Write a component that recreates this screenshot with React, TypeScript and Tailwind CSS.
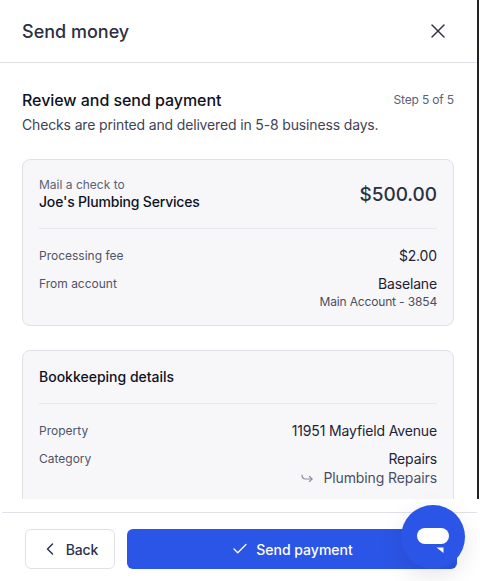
import { Check, ChevronLeft, X } from 'lucide-react';

function Row({ label, value, sub }: { label: string; value: string; sub?: React.ReactNode }) {
  return (
    <div className="flex justify-between">
      <span className="text-[12px] leading-[20px] text-[#4f5468]">{label}</span>
      <div className="text-right">
        <div className="text-[14px] leading-[20px] tracking-[-0.15px] text-[#1f2333]">{value}</div>
        {sub}
      </div>
    </div>
  );
}

export default function App() {
  return (
    <div className="relative h-[581px] w-[480px] overflow-hidden bg-white font-['Inter',sans-serif]">
      <div className="flex h-[499px] w-[479px] flex-col border-r-2 border-[#222]">
        {/* Header */}
        <div className="flex h-[63px] shrink-0 items-center justify-between border-b border-[#dfe1e6] pl-[22px] pr-[27px]">
          <h1 className="text-[18px] font-medium text-[#2c3040]">Send money</h1>
          <X size={24} strokeWidth={1.4} className="text-[#2c3040]" />
        </div>

        {/* Scroll body */}
        <div className="min-h-0 flex-1 overflow-hidden pl-[22px] pr-[23px] pt-[26px]">
          <div className="flex items-center justify-between">
            <h2 className="text-[16px] font-medium leading-[22px] tracking-[-0.05px] text-[#0f1322]">Review and send payment</h2>
            <span className="text-[12px] tracking-[-0.15px] text-[#5c6175]">Step 5 of 5</span>
          </div>
          <p className="mt-[4px] text-[14px] leading-[20px] tracking-[-0.15px] text-[#3f4356]">
            Checks are printed and delivered in 5-8 business days.
          </p>

          <div className="mt-[24px] rounded-lg border border-[#dfe1e6] bg-[#f7f7fa] px-4 pb-[15px] pt-[16px]">
            <div className="flex items-center justify-between border-b border-[#e6e8ed] pb-[17px]">
              <div>
                <div className="text-[12px] leading-[17px] text-[#5c6175]">Mail a check to</div>
                <div className="text-[14px] font-medium leading-[18px] tracking-[-0.18px] text-[#0f1322]">Joe's Plumbing Services</div>
              </div>
              <div className="mt-[3px] text-[19px] font-medium leading-[28px] tracking-[-0.05px] text-[#2c3040]">$500.00</div>
            </div>
            <div className="mt-[17px] flex flex-col gap-2">
              <Row label="Processing fee" value="$2.00" />
              <Row
                label="From account"
                value="Baselane"
                sub={<div className="text-[12px] leading-[16px] tracking-[-0.15px] text-[#4a4f63]">Main Account - 3854</div>}
              />
            </div>
          </div>

          <div className="mt-6 rounded-lg border border-[#dfe1e6] bg-[#f7f7fa] px-4 pb-6 pt-[16px]">
            <div className="border-b border-[#e6e8ed] pb-[16px] text-[14px] font-medium leading-[20px] text-[#0f1322]">
              Bookkeeping details
            </div>
            <div className="mt-[17px] flex flex-col gap-2">
              <Row label="Property" value="11951 Mayfield Avenue" />
              <Row
                label="Category"
                value="Repairs"
                sub={
                  <div className="-mt-[1px] flex items-center justify-end gap-[10px] text-[14px] leading-[20px] tracking-[-0.1px] text-[#4a4f63]">
                    <svg width="12" height="8" viewBox="0 0 12 8" fill="none" stroke="#8a8fa3" strokeWidth="1.2" strokeLinecap="round" strokeLinejoin="round">
                      <path d="M1 1 C1 3.5 2.5 5 4.5 5 H11" />
                      <path d="M8.5 2.5 L11 5 L8.5 7.5" />
                    </svg>
                    Plumbing Repairs
                  </div>
                }
              />
            </div>
          </div>
        </div>
      </div>

      {/* Footer */}
      <div className="ml-[2px] mt-[13px] flex w-[475px] gap-3 border-t border-[#dfe1e6] pl-[23px] pr-[20px] pt-4">
        <button className="flex h-10 w-[90px] items-center justify-center gap-[6px] rounded-md border border-[#dfe1e6] pr-[2px] text-[14px] font-medium tracking-[-0.1px] text-[#2c3050]">
          <ChevronLeft size={20} strokeWidth={1.75} />
          Back
        </button>
        <button className="flex h-10 flex-1 items-center justify-center gap-[7px] rounded-md bg-[#2b55e6] text-[14px] font-medium text-white">
          <Check size={18} strokeWidth={1.75} />
          Send payment
        </button>
      </div>

      {/* Chat bubble */}
      <div className="absolute left-[401px] top-[505px] flex h-16 w-16 items-center justify-center rounded-full bg-[#2b55e6] shadow-[0_8px_24px_rgba(0,0,0,0.1)]">
        <svg width="34" height="26" viewBox="0 0 34 26" fill="white" className="mt-[5px]">
          <rect x="1" y="1" width="32" height="16" rx="8" />
          <path d="M20.5 20.5 L27.5 20.5 L27.5 26 Z" />
        </svg>
      </div>
    </div>
  );
}
